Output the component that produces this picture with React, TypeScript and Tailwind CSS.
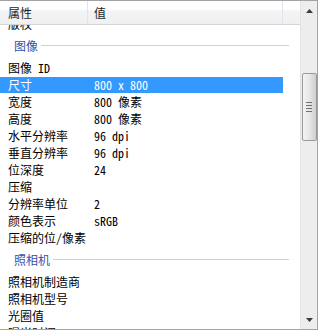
type Row = { name: string; value?: string; selected?: boolean }

type Group = { title: string; rows: Row[] }

const groups: Group[] = [
  {
    title: "图像",
    rows: [
      { name: "图像 ID" },
      { name: "尺寸", value: "800 x 800", selected: true },
      { name: "宽度", value: "800 像素" },
      { name: "高度", value: "800 像素" },
      { name: "水平分辨率", value: "96 dpi" },
      { name: "垂直分辨率", value: "96 dpi" },
      { name: "位深度", value: "24" },
      { name: "压缩" },
      { name: "分辨率单位", value: "2" },
      { name: "颜色表示", value: "sRGB" },
      { name: "压缩的位/像素" },
    ],
  },
  {
    title: "照相机",
    rows: [
      { name: "照相机制造商" },
      { name: "照相机型号" },
      { name: "光圈值" },
      { name: "曝光时间" },
    ],
  },
]

function PropRow({ name, value, selected }: Row) {
  return (
    <div className="h-[17px] pt-px">
      <div
        className={`flex h-[16px] w-[283px] items-center leading-[16px] ${
          selected ? "bg-[#3399ff] text-white" : "text-black"
        }`}
      >
        <span className="w-[94px] shrink-0 whitespace-nowrap pl-[8px]">{name}</span>
        <span className="whitespace-pre">{value}</span>
      </div>
    </div>
  )
}

function GroupHeader({ title }: { title: string }) {
  return (
    <div className="flex h-[27px] items-center pl-[14px] pr-[11px] leading-[16px]">
      <span className="text-[#3552a8]">{title}</span>
      <div className="ml-[3px] h-px flex-1 bg-[#c9d3de]" />
    </div>
  )
}

function ScrollBar() {
  return (
    <div className="flex w-[17px] flex-col items-center border-l border-[#e3e3e3] bg-[#ededed]">
      <div className="flex h-[19px] w-full items-center justify-center">
        <svg width="7" height="4" viewBox="0 0 7 4">
          <path d="M3.5 0 L7 4 L0 4 Z" fill="#3c3c3c" />
        </svg>
      </div>
      <div className="mt-[53px] flex h-[68px] w-[15px] items-center justify-center rounded-[2px] border border-[#9a9a9a] bg-gradient-to-r from-[#f4f4f4] via-[#e6e6e6] to-[#cfcfcf]">
        <div className="flex flex-col gap-[2px]">
          <div className="h-px w-[6px] bg-[#6f6f6f]" />
          <div className="h-px w-[6px] bg-[#6f6f6f]" />
          <div className="h-px w-[6px] bg-[#6f6f6f]" />
          <div className="h-px w-[6px] bg-[#6f6f6f]" />
        </div>
      </div>
      <div className="flex-1" />
      <div className="flex h-[19px] w-full items-center justify-center">
        <svg width="7" height="4" viewBox="0 0 7 4">
          <path d="M0 0 L7 0 L3.5 4 Z" fill="#3c3c3c" />
        </svg>
      </div>
    </div>
  )
}

export default function App() {
  return (
    <div className="flex h-[330px] w-[318px] overflow-hidden border-y border-r border-[#a3a3a3] bg-white font-['Noto_Sans_Mono_CJK_SC','Noto_Sans_CJK_SC',sans-serif] text-[12px]">
      <div className="flex w-[300px] flex-col">
        <div className="flex h-[24px] shrink-0 border-b border-[#d5d5d5] bg-[linear-gradient(#ffffff_0%,#ffffff_35%,#f2f3f5_45%,#eff0f2_100%)] font-['Noto_Sans_CJK_SC',sans-serif] leading-[16px] text-[#1e1e1e]">
          <div className="flex w-[88px] items-center border-r border-[#e1e5ea] pl-[8px]">属性</div>
          <div className="flex w-[195px] items-center border-r border-[#e1e5ea] pl-[6px]">值</div>
          <div className="flex-1" />
        </div>
        <div className="flex-1 overflow-hidden">
          <div className="-mt-[10px]">
            <PropRow name="版权" />
            {groups.map((g) => (
              <div key={g.title}>
                <GroupHeader title={g.title} />
                {g.rows.map((r) => (
                  <PropRow key={r.name} {...r} />
                ))}
              </div>
            ))}
          </div>
        </div>
      </div>
      <ScrollBar />
    </div>
  )
}
